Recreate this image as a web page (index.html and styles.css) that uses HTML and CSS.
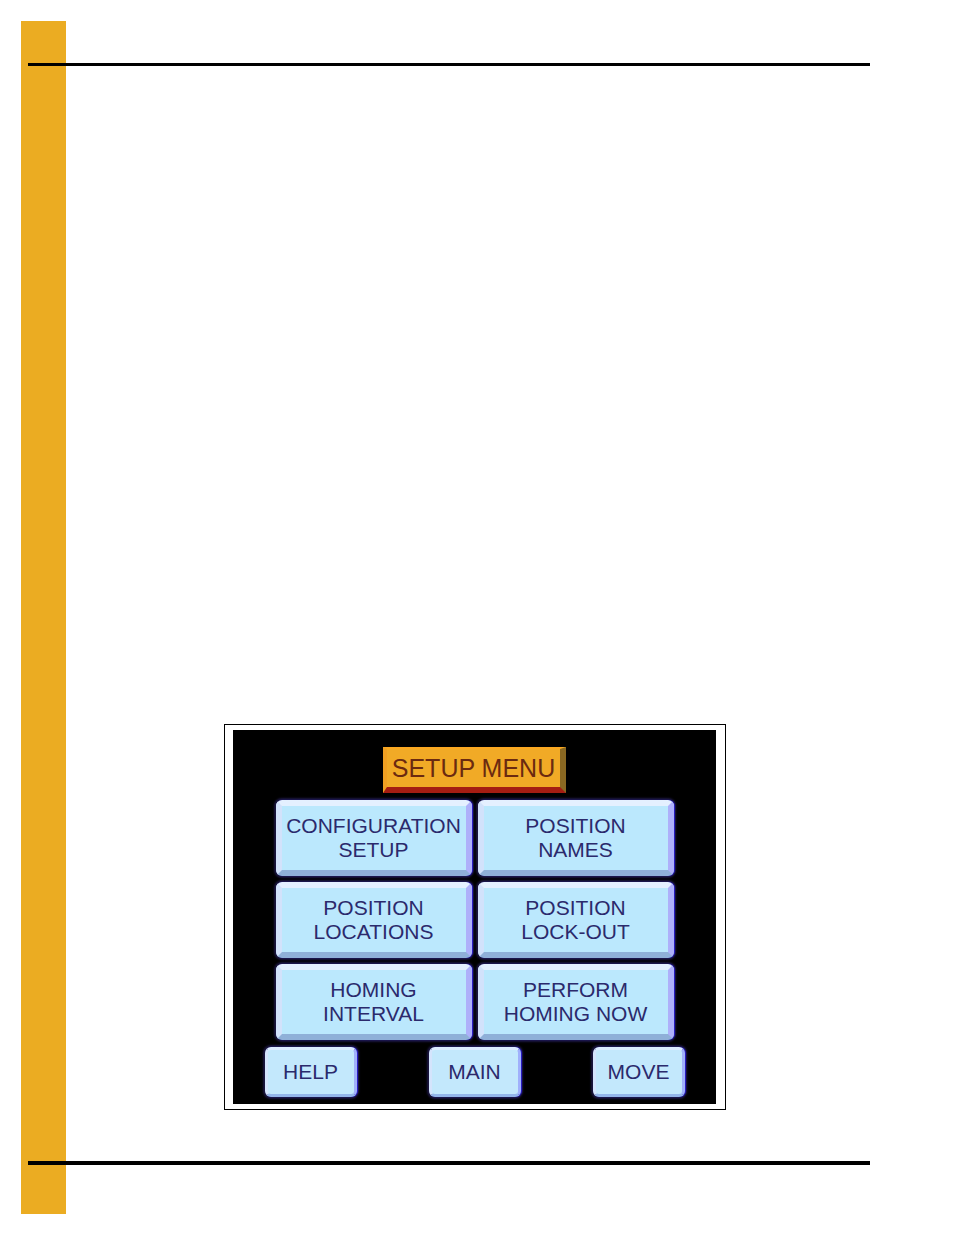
FILE: index.html
```html
<!DOCTYPE html>
<html lang="en">
<head>
    <meta charset="UTF-8">
    <meta name="viewport" content="width=device-width, initial-scale=1.0">
    <title>Setup Menu</title>
    <link rel="stylesheet" href="styles.css">
</head>
<body>
    <div class="page">
        <hr class="rule">
        <main>
            <div class="figure">
                <div class="screen">
                    <h1>SETUP MENU</h1>
                    <div class="menu">
                        <button type="button">CONFIGURATION<br>SETUP</button>
                        <button type="button">POSITION<br>NAMES</button>
                        <button type="button">POSITION<br>LOCATIONS</button>
                        <button type="button">POSITION<br>LOCK-OUT</button>
                        <button type="button">HOMING<br>INTERVAL</button>
                        <button type="button">PERFORM<br>HOMING NOW</button>
                    </div>
                    <div class="nav">
                        <button type="button">HELP</button>
                        <button type="button">MAIN</button>
                        <button type="button">MOVE</button>
                    </div>
                </div>
            </div>
        </main>
        <hr class="rule bottom">
    </div>
</body>
</html>
```

FILE: styles.css
```css
* {
    box-sizing: border-box;
}

body {
    font-family: "Liberation Sans", Arial, sans-serif;
    background: #fff;
    margin: 0;
}

/* yellow stripe runs down the left side of the sheet */
.page {
    display: flex;
    flex-direction: column;
    min-height: calc(100vh - 42px);
    margin: 21px 84px 21px 21px;
    padding: 42px 0 49px;
    background: linear-gradient(#ebac22, #ebac22) left top / 45px 100% no-repeat;
}

.rule {
    width: auto;
    height: 3px;
    margin: 0 0 0 7px;
    border: none;
    background: #000;
}

.rule.bottom {
    height: 4px;
}

main {
    flex: 1;
    display: flex;
    align-items: flex-end;
    padding: 0 0 51px 203px;
}

.figure {
    width: 100%;
    max-width: 502px;
    padding: 5px 9px 5px 8px;
    border: 1px solid #000;
}

.screen {
    display: flex;
    flex-direction: column;
    align-items: center;
    padding: 17px 31px 7px;
    background: #000;
}

h1 {
    margin: 0 0 7px;
    padding: 0 5px;
    border: 4px solid;
    border-width: 2px 6px 6px 4px;
    border-color: #fba821 #8a6822 #a51d12 #f0a022;
    background: #f1aa26;
    color: #6b2a10;
    font-size: 25px;
    font-weight: normal;
    line-height: 38px;
}

.menu {
    display: grid;
    grid-template-columns: 1fr 1fr;
    gap: 6px;
    width: 100%;
    max-width: 398px;
    margin-bottom: 7px;
}

.nav {
    display: flex;
    justify-content: space-between;
    width: 100%;
    max-width: 420px;
}

button {
    height: 76px;
    padding: 0;
    border: 6px solid;
    border-color: #e4f0ff #aeb0fa #8fb0d8 #d2e2fb;
    border-radius: 6px;
    background: #bbe8fd;
    box-shadow: 1px 0 1px #2c1fd0, 0 0 2px 2px #1b1640;
    color: #2b2a6c;
    font-family: inherit;
    font-size: 21px;
    line-height: 24px;
    white-space: nowrap;
    cursor: pointer;
}

.nav button {
    width: 92px;
    height: 50px;
    border-width: 3px;
    border-color: #dcecff #a0b0fb #94b6ea #d4e4fc;
    background: #c3e8fc;
}
```
